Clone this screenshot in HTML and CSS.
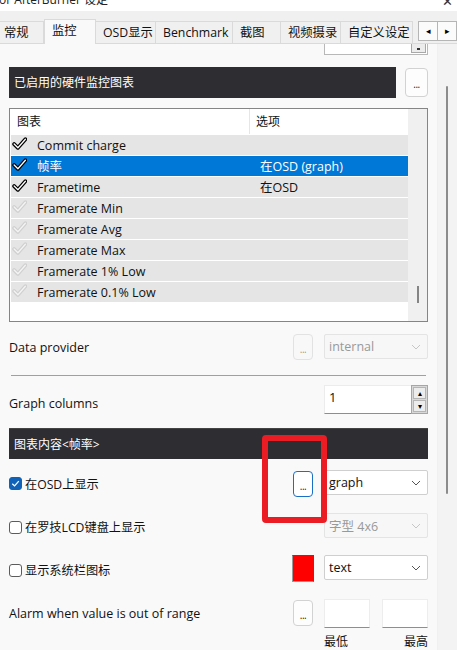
FILE: index.html
```html
<!DOCTYPE html>
<html lang="zh-CN">
<head>
<meta charset="utf-8">
<title>MSI Afterburner 设定</title>
<link rel="stylesheet" href="styles.css">
</head>
<body>
<div class="titlebar"><span class="title-text">ior AfterBurner 设定</span><span class="close">✕</span></div>
<div class="tabstrip">
  <div class="tab w44">常规</div>
  <div class="tab sel w51">监控</div>
  <div class="tab w60">OSD显示</div>
  <div class="tab w77">Benchmark</div>
  <div class="tab w48">截图</div>
  <div class="tab w60">视频摄录</div>
  <div class="tab w72">自定义设定</div>
  <div class="tab-arrows">
    <div class="arrow-btn">◂</div>
    <div class="arrow-btn">▸</div>
  </div>
</div>
<div class="main">
  <div class="content">
    <div class="topcombo-row"><div class="topcombo"><div class="topcombo-btn"></div></div></div>

    <div class="hdr-row">
      <div class="darkbar">已启用的硬件监控图表</div>
      <div class="btn big">...</div>
    </div>

    <div class="listbox">
      <div class="list-main">
        <div class="list-head">
          <div class="c1">图表</div>
          <div class="c2">选项</div>
        </div>
        <div class="rows">
          <div class="row"><svg class="chk on" viewBox="0 0 14 12"><path d="M2 6.5 L5.5 10 L12.5 2"/><path class="in" d="M2 6.5 L5.5 10 L12.5 2"/></svg><span class="c1t">Commit charge</span><span class="c2t"></span></div>
          <div class="row selrow"><svg class="chk on" viewBox="0 0 14 12"><path d="M2 6.5 L5.5 10 L12.5 2"/><path class="in" d="M2 6.5 L5.5 10 L12.5 2"/></svg><span class="c1t">帧率</span><span class="c2t">在OSD (graph)</span></div>
          <div class="row"><svg class="chk on" viewBox="0 0 14 12"><path d="M2 6.5 L5.5 10 L12.5 2"/><path class="in" d="M2 6.5 L5.5 10 L12.5 2"/></svg><span class="c1t">Frametime</span><span class="c2t">在OSD</span></div>
          <div class="row"><svg class="chk off" viewBox="0 0 14 12"><path d="M2 6.5 L5.5 10 L12.5 2"/><path class="in" d="M2 6.5 L5.5 10 L12.5 2"/></svg><span class="c1t">Framerate Min</span><span class="c2t"></span></div>
          <div class="row"><svg class="chk off" viewBox="0 0 14 12"><path d="M2 6.5 L5.5 10 L12.5 2"/><path class="in" d="M2 6.5 L5.5 10 L12.5 2"/></svg><span class="c1t">Framerate Avg</span><span class="c2t"></span></div>
          <div class="row"><svg class="chk off" viewBox="0 0 14 12"><path d="M2 6.5 L5.5 10 L12.5 2"/><path class="in" d="M2 6.5 L5.5 10 L12.5 2"/></svg><span class="c1t">Framerate Max</span><span class="c2t"></span></div>
          <div class="row"><svg class="chk off" viewBox="0 0 14 12"><path d="M2 6.5 L5.5 10 L12.5 2"/><path class="in" d="M2 6.5 L5.5 10 L12.5 2"/></svg><span class="c1t">Framerate 1% Low</span><span class="c2t"></span></div>
          <div class="row"><svg class="chk off" viewBox="0 0 14 12"><path d="M2 6.5 L5.5 10 L12.5 2"/><path class="in" d="M2 6.5 L5.5 10 L12.5 2"/></svg><span class="c1t">Framerate 0.1% Low</span><span class="c2t"></span></div>
        </div>
      </div>
      <div class="list-sb"><div class="list-thumb"></div></div>
    </div>

    <div class="frow r-provider">
      <div class="label">Data provider</div>
      <div class="btn small disabled">...</div>
      <div class="combo disabled"><span>internal</span><svg class="chev" viewBox="0 0 10 6"><path d="M1 1 L5 5 L9 1"/></svg></div>
    </div>

    <div class="hr"></div>

    <div class="frow r-cols">
      <div class="label lower">Graph columns</div>
      <div class="spin">
        <div class="spin-input">1</div>
        <div class="spin-btns">
          <div class="spin-b">▴</div>
          <div class="spin-b">▾</div>
        </div>
      </div>
    </div>

    <div class="darkbar full">图表内容&lt;帧率&gt;</div>

    <div class="frow r-osd">
      <label class="cb-label"><span class="cb checked"><svg viewBox="0 0 12 12"><path d="M2.5 6.2 L5 8.6 L9.6 3.4"/></svg></span>在OSD上显示</label>
      <div class="btn small focus">...</div>
      <div class="combo"><span>graph</span><svg class="chev" viewBox="0 0 10 6"><path d="M1 1 L5 5 L9 1"/></svg></div>
    </div>

    <div class="frow r-lcd">
      <label class="cb-label"><span class="cb"></span>在罗技LCD键盘上显示</label>
      <div class="combo disabled"><span>字型 4x6</span><svg class="chev" viewBox="0 0 10 6"><path d="M1 1 L5 5 L9 1"/></svg></div>
    </div>

    <div class="frow r-tray">
      <label class="cb-label"><span class="cb"></span>显示系统栏图标</label>
      <div class="swatch"></div>
      <div class="combo"><span>text</span><svg class="chev" viewBox="0 0 10 6"><path d="M1 1 L5 5 L9 1"/></svg></div>
    </div>

    <div class="frow r-alarm">
      <div class="label">Alarm when value is out of range</div>
      <div class="btn small">...</div>
      <div class="box"></div>
      <div class="box"></div>
    </div>

    <div class="minmax"><span>最低</span><span>最高</span></div>
  </div>
  <div class="vscroll"><div class="vthumb"></div></div>
</div>
<div class="annot"></div>
</body>
</html>
```
FILE: styles.css
```css
* { box-sizing: border-box; }
html, body { margin: 0; padding: 0; }
body {
  width: 457px;
  height: 650px;
  overflow: hidden;
  background: #f9f9f9;
  font-family: "Open Sans", "Noto Sans CJK SC", sans-serif;
  font-size: 12.5px;
  color: #111;
  position: relative;
}

.titlebar {
  height: 11px;
  background: #fff;
  overflow: hidden;
  display: flex;
  justify-content: space-between;
}
.title-text {
  display: block;
  margin-top: -9px;
  margin-left: -4px;
  line-height: 18px;
  font-size: 12px;
  color: #222;
}
.close {
  display: block;
  margin-top: -8px;
  margin-right: 4px;
  line-height: 18px;
  font-size: 13px;
  color: #333;
}

.tabstrip {
  height: 33px;
  background: #f0f0f0;
  display: flex;
  align-items: flex-end;
  border-bottom: 1px solid #dadada;
}
.tab {
  height: 22px;
  line-height: 22px;
  padding-left: 7px;
  background: #f0f0f0;
  border-top: 1px solid #dadada;
  border-right: 1px solid #dadada;
  white-space: nowrap;
  font-size: 12.3px;
}
.tab:first-child { padding-left: 4px; }
.tab.sel {
  height: 25px;
  line-height: 21px;
  margin-bottom: -1px;
  background: #f9f9f9;
  border-left: 1px solid #dadada;
  position: relative;
}
.w44 { width: 44px; }
.w51 { width: 52px; }
.w60 { width: 60px; }
.w77 { width: 77px; }
.w48 { width: 48px; }
.w72 { width: 72px; }
.tab-arrows {
  margin-left: auto;
  display: flex;
  margin-bottom: 2px;
}
.arrow-btn {
  width: 20px;
  height: 20px;
  border: 1px solid #b5b5b5;
  background: #fbfbfb;
  font-size: 9px;
  line-height: 18px;
  text-align: center;
  color: #000;
}
.arrow-btn + .arrow-btn { border-left: none; width: 19px; }

.main { display: flex; height: 606px; }
.content {
  width: 437px;
  padding: 0 9px;
}
.vscroll {
  width: 20px;
  background: #f3f3f3;
  border-left: 1px solid #f0f0f0;
  padding-top: 42px;
}
.vthumb {
  width: 2px;
  height: 408px;
  margin-left: 8px;
  background: #8c8c8c;
  border-radius: 1px;
}

.topcombo-row { display: flex; justify-content: flex-end; }
.topcombo {
  width: 104px;
  height: 11px;
  background: #fff;
  border: 1px solid #b8b8b8;
  border-top: none;
  display: flex;
  justify-content: flex-end;
  padding-right: 1px;
}
.topcombo-btn {
  width: 15px;
  height: 9px;
  background: #ececec;
  border: 1px solid #a8a8a8;
  border-top: none;
}
.topcombo-btn::after {
  content: "";
  display: block;
  width: 3px;
  height: 2px;
  background: #333;
  margin: 4px auto 0;
}

.hdr-row {
  margin-top: 12px;
  display: flex;
  gap: 9px;
}
.darkbar {
  flex: 1;
  height: 31px;
  line-height: 31px;
  background: #2d2d32;
  color: #fff;
  padding-left: 5px;
  font-size: 12px;
}
.darkbar.full {
  margin-top: 14px;
  border-top: 1px solid #444;
}
.btn {
  background: #fdfdfd;
  border: 1px solid #d2d2d2;
  border-radius: 4px;
  text-align: center;
  font-size: 10px;
  color: #222;
  letter-spacing: -0.5px;
}
.btn.big {
  width: 23px;
  height: 29px;
  margin-top: 1px;
  line-height: 31px;
}
.btn.small {
  width: 20px;
  height: 26px;
  line-height: 28px;
}
.btn.disabled { color: #9a9a9a; border-color: #e2e2e2; background: #f8f8f8; }
.btn.focus { border-color: #1a6fc4; background: #fff; }

.listbox {
  margin-top: 10px;
  height: 214px;
  border: 1px solid #858585;
  background: #fff;
  display: flex;
}
.list-main { flex: 1; }
.list-head {
  height: 25px;
  display: flex;
  line-height: 25px;
  font-size: 12px;
}
.list-head .c1 {
  width: 240px;
  padding-left: 7px;
  border-right: 1px solid #e6e6e6;
}
.list-head .c2 { padding-left: 6px; }
.rows { padding-top: 1px; padding-left: 1px; }
.row {
  height: 20px;
  margin-bottom: 1px;
  background: #e5e5e5;
  display: flex;
  align-items: center;
  line-height: 20px;
  padding-top: 1px;
  white-space: nowrap;
}
.row.selrow { background: #0078d7; color: #fff; }
.chk {
  width: 15px;
  height: 13px;
  margin-left: 1px;
  margin-top: -5px;
  flex: none;
  fill: none;
  stroke-linecap: round;
  stroke-linejoin: round;
}
.chk path { stroke-width: 3.6; }
.chk path.in { stroke-width: 1.2; }
.chk.on path { stroke: #000; }
.chk.on path.in { stroke: #fff; }
.chk.off path { stroke: #d0d0d0; }
.chk.off path.in { stroke: #f4f4f4; }
.c1t { width: 233px; padding-left: 10px; }

.list-sb {
  width: 19px;
  background: #f0f0f0;
  padding-top: 177px;
}
.list-thumb {
  width: 2px;
  height: 17px;
  margin-left: 9px;
  background: #858585;
}

.frow {
  display: flex;
  align-items: center;
}
.label { flex: 1; white-space: nowrap; }
.label.lower { margin-top: 7px; }
.combo {
  width: 104px;
  height: 25px;
  background: #fff;
  border: 1px solid #cfcfcf;
  border-radius: 2px;
  display: flex;
  align-items: center;
  justify-content: space-between;
  padding: 0 6px 0 4px;
  margin-left: 11px;
}
.combo.disabled { background: #f7f7f7; border-color: #e4e4e4; color: #999; }
.chev {
  width: 10px;
  height: 6px;
  fill: none;
  stroke: #555;
  stroke-width: 1;
}
.combo.disabled .chev { stroke: #c6c6c6; }

.r-provider { margin-top: 12px; height: 26px; }
.r-provider .combo { align-self: flex-start; }
.hr {
  margin: 15px 2px 0 2px;
  height: 1px;
  background: #a0a0a0;
}
.r-cols { margin-top: 9px; height: 29px; }
.spin {
  width: 104px;
  height: 29px;
  display: flex;
}
.spin-input {
  flex: 1;
  background: #fff;
  border-top: 1px solid #ececec;
  border-left: 1px solid #ececec;
  border-bottom: 1px solid #8e8e8e;
  padding-left: 4px;
  line-height: 22px;
  font-size: 13px;
}
.spin-btns {
  width: 17px;
  border: 1px solid #a6a6a6;
  background: #d8d8d8;
  display: flex;
  flex-direction: column;
  gap: 1px;
  padding: 1px;
}
.spin-b {
  flex: 1;
  background: #ececec;
  border: 1px solid #b5b5b5;
  font-size: 8px;
  line-height: 10px;
  text-align: center;
  color: #000;
}

.cb-label {
  flex: 1;
  display: flex;
  align-items: center;
  gap: 3px;
  white-space: nowrap;
  font-size: 12.2px;
}
.cb {
  width: 13px;
  height: 13px;
  border: 1px solid #5c5c5c;
  border-radius: 3px;
  background: #fff;
  flex: none;
  display: flex;
}
.cb.checked { background: #0f62b8; border-color: #0f62b8; }
.cb svg { width: 11px; height: 11px; fill: none; stroke: #fff; stroke-width: 1.4; }

.r-osd { margin-top: 11px; height: 27px; }
.r-osd .combo { align-self: flex-start; }
.r-lcd { margin-top: 16px; height: 25px; }
.r-lcd .cb-label { margin-top: 3px; }
.r-tray { margin-top: 17px; height: 27px; }
.r-tray .cb-label { margin-top: 3px; }
.r-tray .combo { align-self: flex-start; margin-left: 10px; }
.swatch {
  width: 22px;
  height: 27px;
  background: #ff0000;
  border: 1px solid #9a9a9a;
  border-top-color: #ff0000;
  border-right-color: #ff0000;
}
.r-alarm { margin-top: 16px; height: 30px; }
.box {
  width: 46px;
  height: 29px;
  background: #fff;
  border-top: 1px solid #ededed;
  border-left: 1px solid #ededed;
  border-right: 1px solid #ededed;
  border-bottom: 1px solid #8e8e8e;
  margin-left: 11px;
}
.box + .box { margin-left: 12px; }
.minmax {
  margin-top: 6px;
  margin-left: 315px;
  display: flex;
  justify-content: space-between;
  line-height: 16px;
  font-size: 12px;
}

.annot {
  position: absolute;
  left: 262px;
  top: 435px;
  width: 65px;
  height: 88px;
  border: 6px solid #ec1c24;
  border-radius: 4px;
}
```
